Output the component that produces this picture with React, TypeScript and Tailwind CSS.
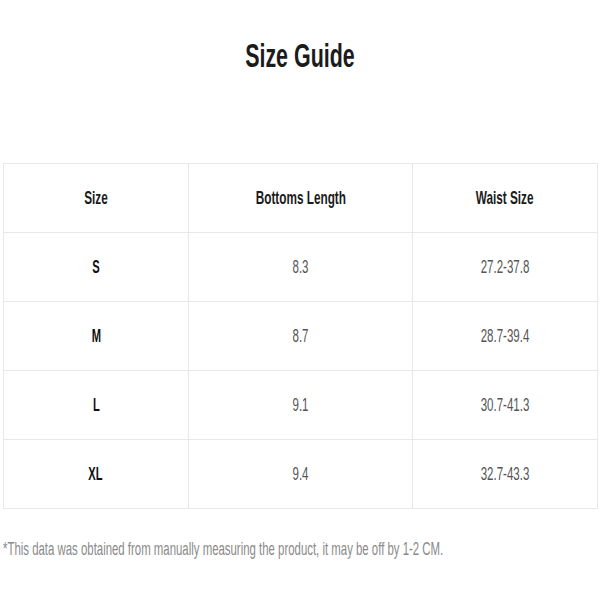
import React from "react";

const rows = [
  ["S", "8.3", "27.2-37.8"],
  ["M", "8.7", "28.7-39.4"],
  ["L", "9.1", "30.7-41.3"],
  ["XL", "9.4", "32.7-43.3"],
];

function Cell({ children, className = "" }: { children: React.ReactNode; className?: string }) {
  return (
    <div className={`flex h-[69px] items-center justify-center border-r border-b border-[#e8e8e8] ${className}`}>
      {children}
    </div>
  );
}

export default function App() {
  return (
    <div className="h-[600px] w-[600px] overflow-hidden bg-white" style={{ fontFamily: '"Liberation Sans", Arial, sans-serif' }}>
      <div className="flex h-[163px] justify-center pt-[38px]">
        <h1 className="inline-block scale-x-[0.63] text-[34px] leading-none font-bold text-[#1b1b1b]">Size Guide</h1>
      </div>
      <div className="mx-[3px] grid w-[595px] grid-cols-[185px_224px_1fr] border-t border-l border-[#e8e8e8]">
        <Cell>
          <span className="inline-block scale-x-[0.62] text-[19px] font-bold text-[#1b1b1b]">Size</span>
        </Cell>
        <Cell>
          <span className="inline-block scale-x-[0.62] text-[19px] font-bold whitespace-nowrap text-[#1b1b1b]">Bottoms Length</span>
        </Cell>
        <Cell>
          <span className="inline-block scale-x-[0.62] text-[19px] font-bold whitespace-nowrap text-[#1b1b1b]">Waist Size</span>
        </Cell>
        {rows.map((r) => (
          <React.Fragment key={r[0]}>
            <Cell>
              <span className="inline-block scale-x-[0.62] text-[18px] font-bold text-[#111]">{r[0]}</span>
            </Cell>
            <Cell>
              <span className="inline-block scale-x-[0.64] text-[18px] text-[#555]">{r[1]}</span>
            </Cell>
            <Cell>
              <span className="inline-block scale-x-[0.64] text-[18px] text-[#555]">{r[2]}</span>
            </Cell>
          </React.Fragment>
        ))}
      </div>
      <div className="mt-[26px] w-[600px] overflow-hidden pl-[3px]">
        <p className="inline-block origin-left scale-x-[0.62] text-[18.4px] whitespace-nowrap text-[#8a8a8a]">
          *This data was obtained from manually measuring the product, it may be off by 1-2 CM.
        </p>
      </div>
    </div>
  );
}
